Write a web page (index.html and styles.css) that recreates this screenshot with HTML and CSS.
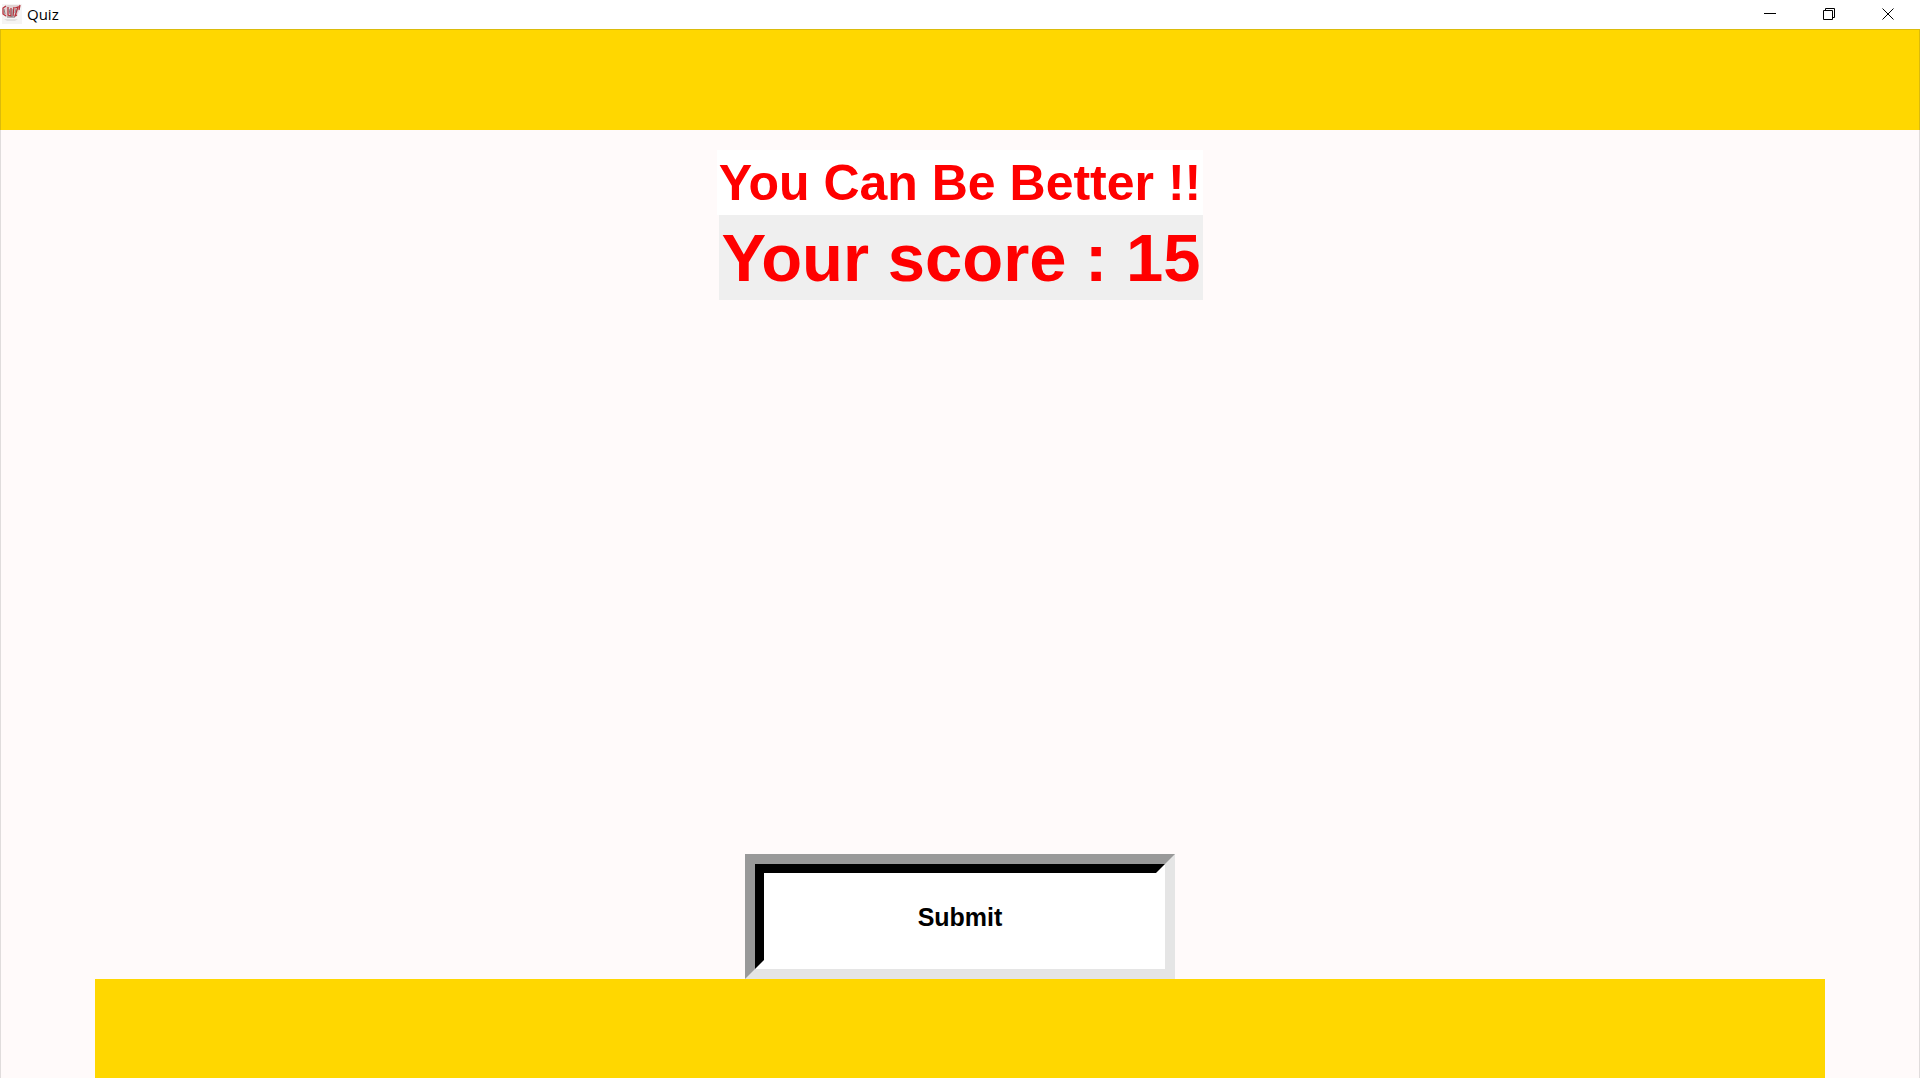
FILE: index.html
```html
<!DOCTYPE html>
<html lang="en">
<head>
<meta charset="utf-8">
<meta name="viewport" content="width=device-width, initial-scale=1">
<title>Quiz</title>
<link rel="stylesheet" href="styles.css">
</head>
<body>
<header class="titlebar">
  <svg class="app-icon" viewBox="0 0 20 20" aria-hidden="true">
    <rect width="20" height="20" fill="#f5f4f4"/>
    <path d="M2 2 6 1 18 1 17 7 15 12 12 14 4 13 1 9Z" fill="#e2d3d3"/>
    <path d="M4 2 1 4 1 10 4 12M6 3 6 11 9 12 9 4M12 3 11 12M13 4 16 3 13 12 15 11M18 1 17 6" fill="none" stroke="#b8323c" stroke-width="1.3"/>
    <path d="M2 5 3 10M7 5 8 10M10 5 10 13M14 5 13 9M5 13h8" fill="none" stroke="#8b7f81" stroke-width="1"/>
    <path d="M2 15h14l-3 2H5z" fill="#e2e0e0"/>
  </svg>
  <h1 class="title">Quiz</h1>
  <div class="window-controls">
    <button class="control" type="button" aria-label="Minimize"><svg viewBox="0 0 12 12"><path d="M0 5.5h12"/></svg></button>
    <button class="control" type="button" aria-label="Restore"><svg viewBox="0 0 12 12"><path d="M.5 2.500h9v9h-9zM2.500 2.500v-2h9v9h-2"/></svg></button>
    <button class="control" type="button" aria-label="Close"><svg viewBox="0 0 12 12"><path d="M.5.5l11 11M11.500.5l-11 11"/></svg></button>
  </div>
</header>
<div class="window">
  <div class="top-band"></div>
  <main class="content">
    <div class="result">
      <p class="message">You Can Be Better !!</p>
      <p class="score">Your score : 15</p>
    </div>
    <button class="submit" type="button"><span class="submit-label">Submit</span></button>
  </main>
  <div class="bottom-band"></div>
</div>
</body>
</html>
```
FILE: styles.css
```css
* {
  box-sizing: border-box;
}

body {
  display: flex;
  flex-direction: column;
  min-height: 100vh;
  margin: 0;
  background: #fffafa;
  font-family: "Liberation Sans", Arial, sans-serif;
}

.titlebar {
  display: flex;
  align-items: flex-start;
  height: 29px;
  padding: 0 3px 0 2px;
  background: #fff;
}

.app-icon {
  width: 20px;
  height: 20px;
  margin-top: 4px;
}

.title {
  flex: 1;
  margin: 0 0 0 5px;
  font: 400 15px/28px "Open Sans", "Noto Sans", sans-serif;
  color: #000;
}

.window-controls {
  display: flex;
  height: 28px;
}

.control {
  display: flex;
  align-items: center;
  justify-content: center;
  width: 59px;
  padding: 0;
  border: 0;
  background: transparent;
}

.control svg {
  width: 12px;
  height: 12px;
  fill: none;
  stroke: #000;
}

.window {
  display: flex;
  flex: 1;
  flex-direction: column;
  box-shadow: inset 1px 0 #e0dcdc, inset -1px 0 #e0dcdc;
}

.top-band {
  height: 101px;
  border: 1px solid #dbbb0b;
  border-bottom: 0;
  background: #ffd700;
}

.content {
  display: flex;
  flex: 1;
  flex-direction: column;
  align-items: center;
  justify-content: space-between;
  padding-top: 20px;
}

.result {
  display: flex;
  flex-direction: column;
  align-items: stretch;
  color: #f00;
  font-weight: 700;
  text-align: center;
  white-space: nowrap;
}

.message {
  margin: 0;
  padding: 2px 2px 0;
  background: #fff;
  font-size: 50px;
  line-height: 63px;
}

.score {
  margin: 0 0 0 2px;
  background: #efefef;
  font-size: 67px;
  line-height: 85px;
}

.submit {
  display: flex;
  width: 430px;
  height: 125px;
  padding: 0;
  border: 10px solid;
  border-color: #999 #e5e5e5 #e5e5e5 #999;
  background: #fff;
  color: #000;
  font: 700 25px/30px "Liberation Sans", Arial, sans-serif;
}

.submit-label {
  display: flex;
  flex: 1;
  align-self: stretch;
  align-items: center;
  justify-content: center;
  border: 9px solid;
  border-color: #000 #fff #fff #000;
}

.bottom-band {
  height: 99px;
  margin: 0 95px;
  background: #ffd700;
}
```
